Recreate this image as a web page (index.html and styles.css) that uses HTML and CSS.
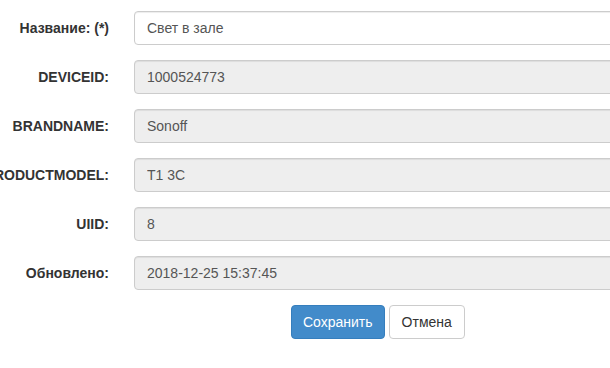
FILE: index.html
```html
<!DOCTYPE html>
<html lang="ru">
<head>
    <meta charset="UTF-8">
    <title>Устройство</title>
    <link rel="stylesheet" href="styles.css">
</head>
<body>
    <form class="device-form">
        <div class="form-group">
            <label class="control-label" for="name">Название: (*)</label>
            <input class="form-control" type="text" id="name" value="Свет в зале">
        </div>
        <div class="form-group">
            <label class="control-label">DEVICEID:</label>
            <input class="form-control" type="text" value="1000524773" readonly>
        </div>
        <div class="form-group">
            <label class="control-label">BRANDNAME:</label>
            <input class="form-control" type="text" value="Sonoff" readonly>
        </div>
        <div class="form-group">
            <label class="control-label">PRODUCTMODEL:</label>
            <input class="form-control" type="text" value="T1 3C" readonly>
        </div>
        <div class="form-group">
            <label class="control-label">UIID:</label>
            <input class="form-control" type="text" value="8" readonly>
        </div>
        <div class="form-group">
            <label class="control-label">Обновлено:</label>
            <input class="form-control" type="text" value="2018-12-25 15:37:45" readonly>
        </div>
        <div class="form-actions">
            <button type="submit" class="btn btn-primary">Сохранить</button>
            <button type="button" class="btn btn-default">Отмена</button>
        </div>
    </form>
</body>
</html>
```

FILE: styles.css
```css
body {
    margin: 0;
    font-family: "Liberation Sans", Arial, sans-serif;
    font-size: 14px;
    line-height: 20px;
    color: #333;
    background-color: #fff;
    overflow: hidden;
}

.device-form {
    padding-top: 11px;
    margin-left: -46px;
}

.form-group {
    display: flex;
    align-items: flex-start;
    margin-bottom: 15px;
}

.control-label {
    flex-shrink: 0;
    width: 155px;
    padding-top: 7px;
    text-align: right;
    font-weight: bold;
    white-space: nowrap;
    color: #333;
}

.form-control {
    box-sizing: border-box;
    flex-shrink: 0;
    margin-left: 25px;
    width: 560px;
    height: 34px;
    padding: 6px 12px;
    font-family: inherit;
    font-size: 14px;
    line-height: 20px;
    color: #555;
    background-color: #fff;
    border: 1px solid #ccc;
    border-radius: 4px;
    box-shadow: inset 0 1px 1px rgba(0, 0, 0, 0.075);
}

.form-control[readonly] {
    background-color: #eee;
}

.form-actions {
    display: flex;
    gap: 4px;
    padding-left: 337px;
}

.btn {
    height: 34px;
    padding: 6px 12px;
    font-family: inherit;
    font-size: 14px;
    line-height: 20px;
    border: 1px solid transparent;
    border-radius: 4px;
    cursor: pointer;
}

.btn-primary {
    padding: 6px 11px;
    color: #fff;
    background-color: #428bca;
    border-color: #357ebd;
}

.btn-default {
    color: #333;
    background-color: #fff;
    border-color: #ccc;
}
```
